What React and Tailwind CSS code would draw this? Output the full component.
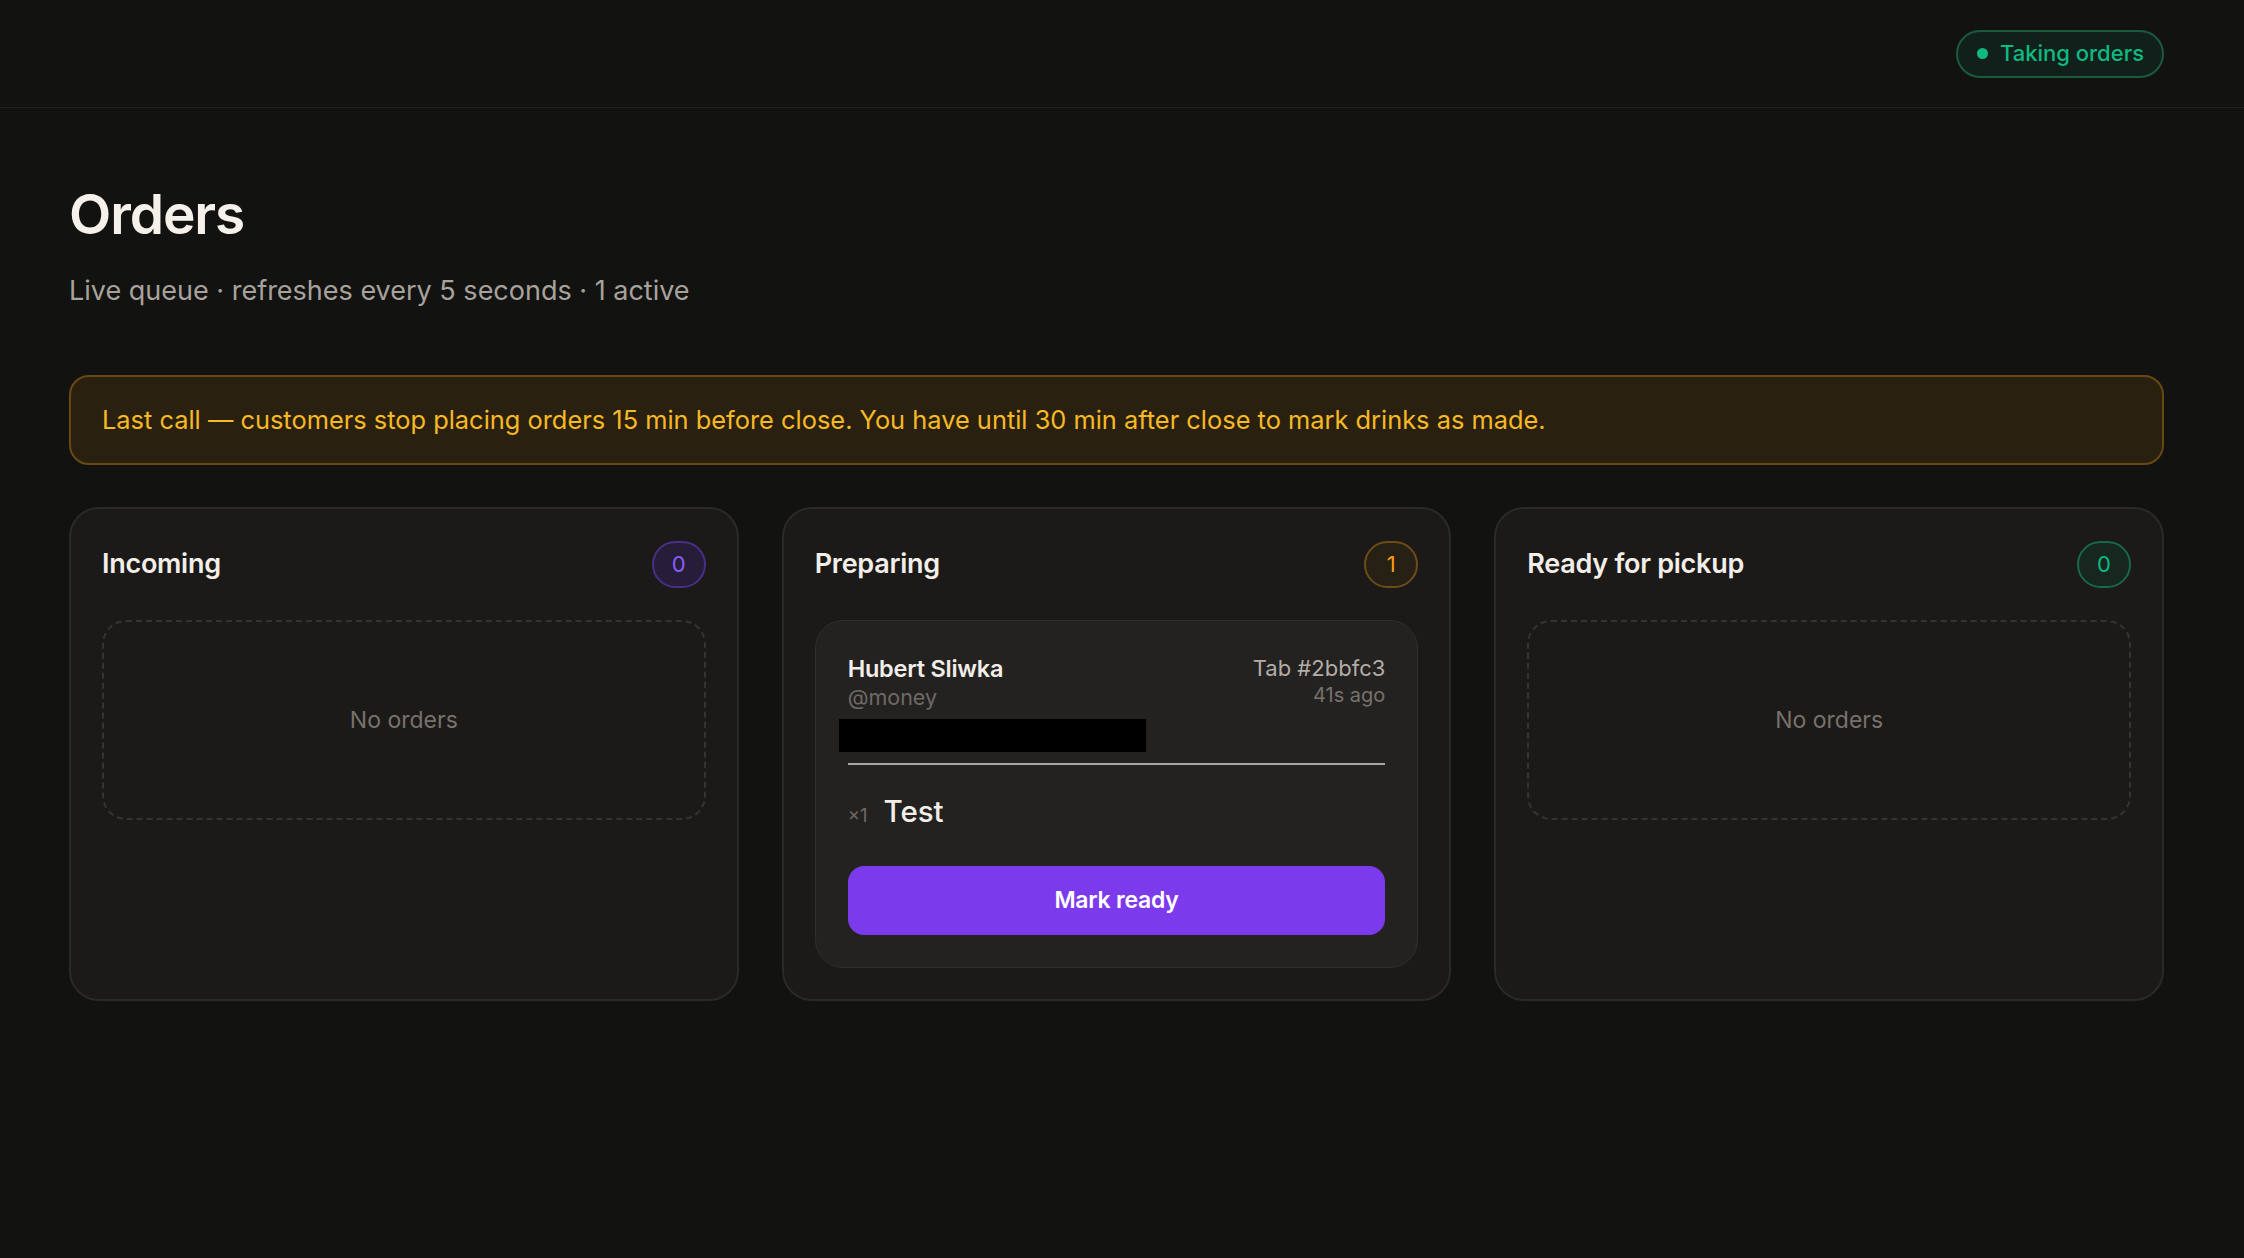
import React from 'react';

const columns = [
    {
        key: 'incoming',
        title: 'Incoming',
        badge: 'bg-[#261d38] border-[#4a2f8a] text-[#8b5cf6]',
        orders: [],
    },
    {
        key: 'preparing',
        title: 'Preparing',
        badge: 'bg-[#272014] border-[#6e4c17] text-[#f59e0b]',
        orders: [
            {
                id: '2bbfc3',
                name: 'Hubert Sliwka',
                handle: '@money',
                age: '41s ago',
                items: [{ qty: 1, name: 'Test' }],
            },
        ],
    },
    {
        key: 'ready',
        title: 'Ready for pickup',
        badge: 'bg-[#16271f] border-[#18684a] text-[#10b981]',
        orders: [],
    },
];

const OrderCard = ({ order }) => (
    <div className="rounded-[28px] border border-[#302e2b] bg-[#232221] px-[32px] pt-[34px] pb-[32px]">
        <div className="flex justify-between">
            <div className="flex flex-col">
                <span className="text-[23.5px] leading-[28px] font-semibold tracking-[-0.01em] text-[#f3eee8]">{order.name}</span>
                <span className="text-[21.5px] leading-[28px] text-[#6f6a65]">{order.handle}</span>
            </div>
            <div className="flex flex-col items-end">
                <span className="text-[22px] leading-[27px] text-[#b3ada6]">Tab #{order.id}</span>
                <span className="text-[20px] leading-[27px] text-[#77726c]">{order.age}</span>
            </div>
        </div>
        {/* contact line, blacked out */}
        <div className="mt-[8px] -ml-[9px] h-[33px] w-[307px] bg-black" />
        <div className="mt-[11px] h-[2px] bg-[#a9a59f]" />
        <div className="mt-[28px] flex flex-col gap-2">
            {order.items.map((item) => (
                <div key={item.name} className="flex items-baseline gap-[16px]">
                    <span className="text-[18.5px] text-[#6f6a65]">×{item.qty}</span>
                    <span className="text-[29.5px] leading-[36px] font-medium text-[#f3eee8]">{item.name}</span>
                </div>
            ))}
        </div>
        <button className="mt-[36px] h-[69px] w-full rounded-[16px] bg-[#7c3aed] text-[23px] font-semibold tracking-[-0.01em] text-white">
            Mark ready
        </button>
    </div>
);

const Column = ({ column }) => (
    <div className="rounded-[30px] border-2 border-[#2c2a28] bg-[#1b1a19] px-[31px] pt-[32px] pb-[31px]">
        <div className="flex h-[47px] items-center justify-between">
            <h2 className="text-[27px] font-semibold tracking-[-0.01em] text-[#f3eee8]">{column.title}</h2>
            <span className={`flex h-[47px] min-w-[54px] items-center justify-center rounded-full border-2 text-[22px] ${column.badge}`}>
                {column.orders.length}
            </span>
        </div>
        <div className="mt-[32px] flex flex-col gap-6">
            {column.orders.length === 0 ? (
                <div className="flex h-[200px] items-center justify-center rounded-[24px] border-2 border-dashed border-[#363432] text-[23px] text-[#77726c]">
                    No orders
                </div>
            ) : (
                column.orders.map((order) => <OrderCard key={order.id} order={order} />)
            )}
        </div>
    </div>
);

export default function App() {
    const active = columns.reduce((n, c) => n + c.orders.length, 0);

    return (
        <div className="min-h-[1258px] bg-[#121211] font-['Inter',sans-serif]">
            <header className="flex h-[108px] items-center justify-end border-b border-[#232120] pr-[80px]">
                <div className="flex h-[48px] items-center gap-[12px] rounded-full border-2 border-[#1b5a3f] bg-[#11201a] pl-[19px] pr-[18px]">
                    <span className="h-[11px] w-[11px] rounded-full bg-[#10b981]" />
                    <span className="text-[22px] font-medium text-[#10b981]">Taking orders</span>
                </div>
            </header>

            <main className="pl-[69px] pr-[80px] pt-[79px]">
                <h1 className="text-[55px] leading-none font-semibold tracking-[-0.02em] text-[#f5f0ea]">Orders</h1>
                <p className="mt-[33px] text-[27px] leading-[32px] text-[#a8a29c]">
                    Live queue · refreshes every 5 seconds · {active} active
                </p>

                <div className="mt-[68px] flex h-[90px] items-center rounded-[20px] border-2 border-[#684814] bg-[#2a2010] px-[31px] text-[25.4px] text-[#f7b924]">
                    Last call — customers stop placing orders 15 min before close. You have until 30 min after close to mark drinks as made.
                </div>

                <div className="mt-[42px] grid grid-cols-3 gap-[43px]">
                    {columns.map((column) => (
                        <Column key={column.key} column={column} />
                    ))}
                </div>
            </main>
        </div>
    );
}
